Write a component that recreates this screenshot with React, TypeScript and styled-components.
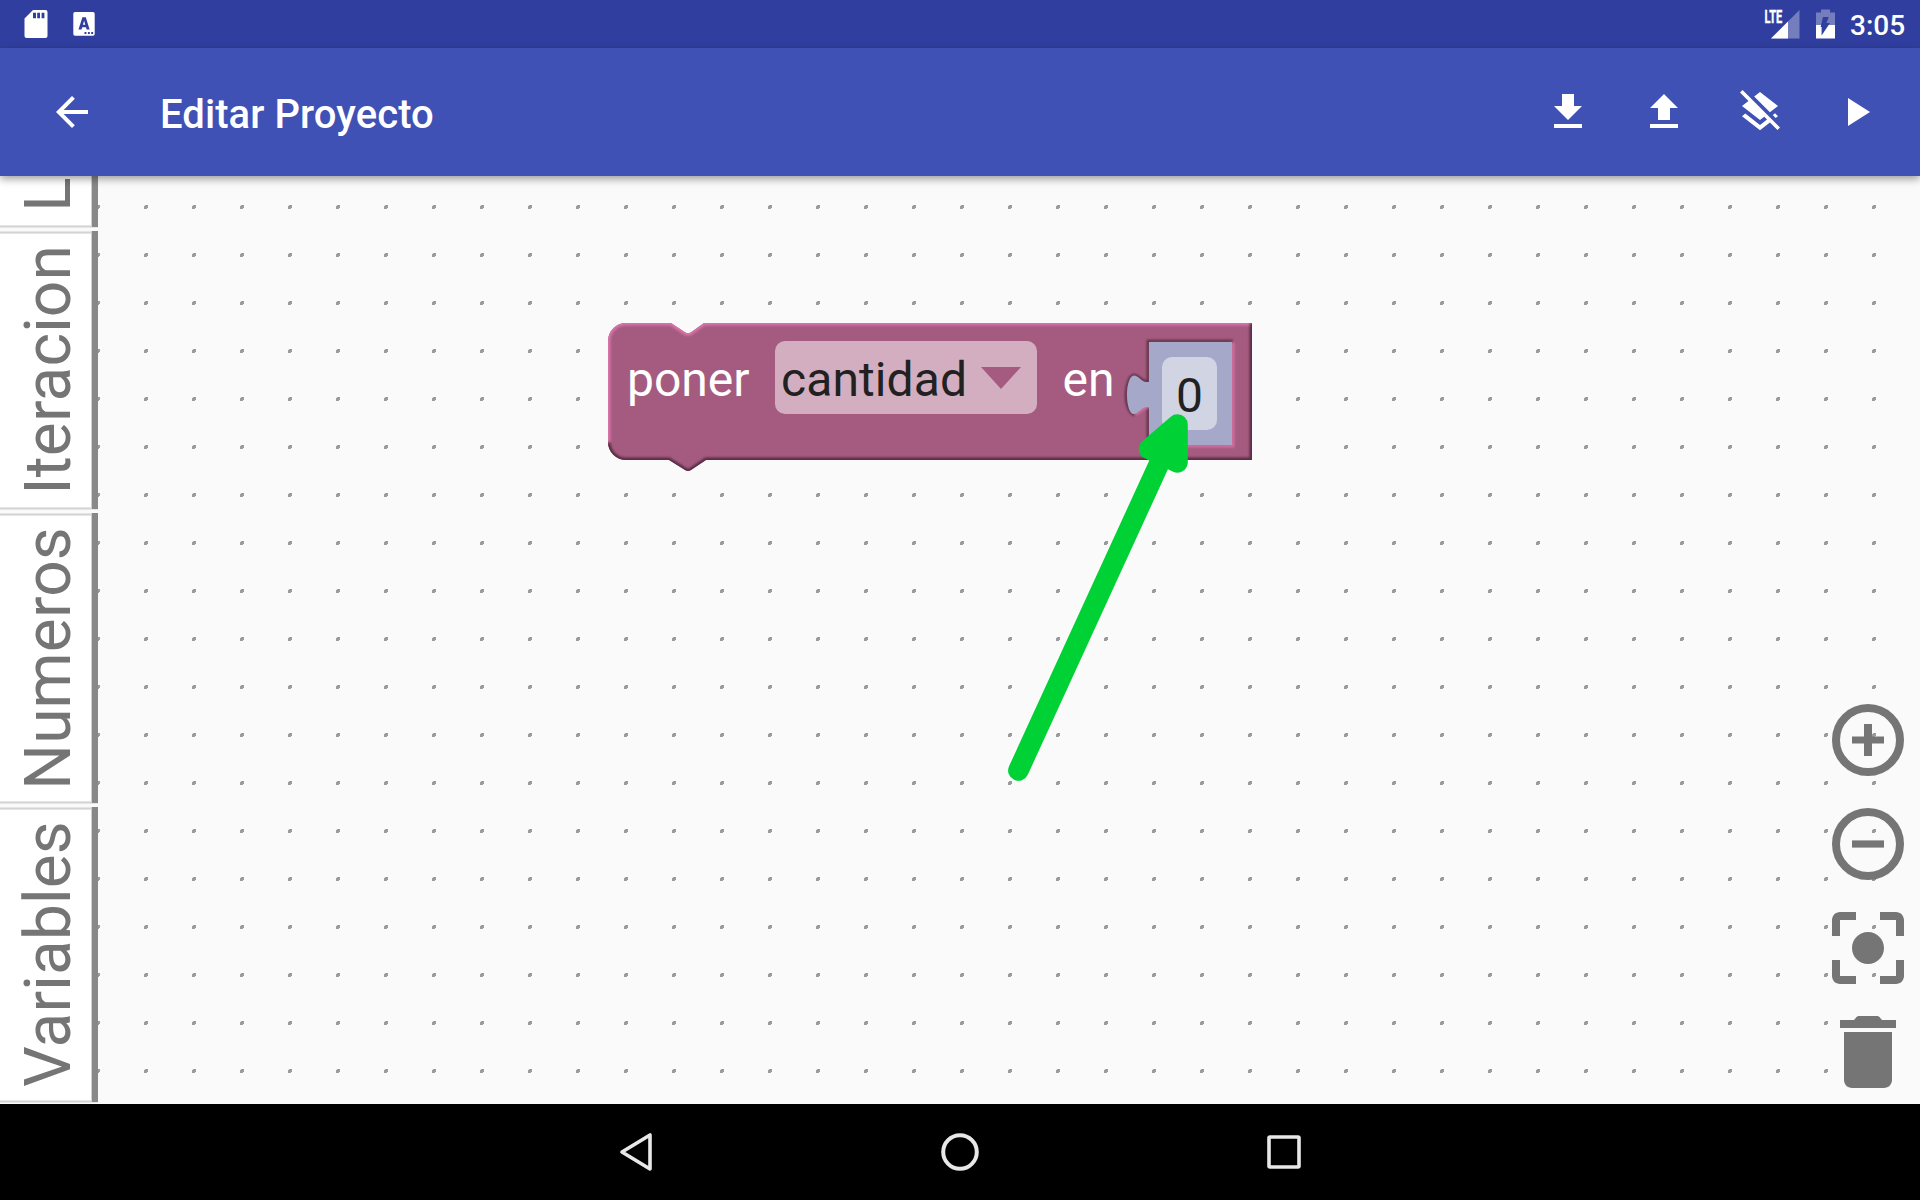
import React from "react";
import styled, { createGlobalStyle } from "styled-components";

const GlobalStyle = createGlobalStyle`
  html, body { margin: 0; padding: 0; background: #000; }
  body { font-family: Roboto, "Noto Sans", sans-serif; overflow: hidden; }
  * { box-sizing: border-box; }
  svg { display: block; }
`;

const Screen = styled.div`
  width: 1920px;
  height: 1200px;
  display: flex;
  flex-direction: column;
  overflow: hidden;
`;

const StatusBar = styled.header`
  height: 48px;
  flex: none;
  background: #303f9f;
  display: flex;
  justify-content: space-between;
  padding: 0 14px 0 24px;
`;

const StatusGroup = styled.div<{ $gap: number }>`
  display: flex;
  align-items: center;
  gap: ${(p) => p.$gap}px;
`;

const Clock = styled.span`
  width: 56px;
  margin-left: -1px;
  font-size: 28px;
  font-weight: 500;
  line-height: 48px;
  padding-top: 3px;
  color: #fff;
  white-space: nowrap;
`;

const AppBar = styled.nav`
  position: relative;
  z-index: 2;
  height: 128px;
  flex: none;
  background: #3f51b5;
  display: flex;
  align-items: center;
  padding: 0 40px 0 48px;
  box-shadow: 0 3px 8px rgba(0, 0, 0, 0.38);
`;

const IconButton = styled.button`
  width: 48px;
  height: 48px;
  padding: 0;
  border: 0;
  background: none;
  color: #fff;
`;

const Title = styled.h1`
  margin: 0 auto 0 64px;
  padding-top: 6px;
  font-size: 40px;
  line-height: 48px;
  font-weight: 500;
  letter-spacing: 0.08px;
  color: #fff;
`;

const Actions = styled.div`
  display: flex;
  gap: 48px;
`;

const Editor = styled.main`
  height: 928px;
  flex: none;
  display: flex;
  background: #fafafa;
`;

const TabList = styled.aside`
  width: 98px;
  flex: none;
  display: flex;
  flex-direction: column;
  justify-content: flex-end;
  gap: 3px;
  padding-bottom: 1px;
  overflow: hidden;
`;

const Tab = styled.div<{ $height: number }>`
  height: ${(p) => p.$height}px;
  flex: none;
  display: flex;
  align-items: center;
  justify-content: center;
  padding-bottom: 1px;
  background:
    linear-gradient(90deg, #d0d0d0 1px, #888 1px) right 0 top 0 / 7px calc(100% - 1px) no-repeat,
    linear-gradient(#e6e6e6 1px, #d3d3d3 1px 2px, #e6e6e6 2px) top / 100% 3px no-repeat,
    linear-gradient(#e6e6e6 1px, #d3d3d3 1px 2px, #e6e6e6 2px) bottom / 100% 3px no-repeat,
    #fff;
`;

const TabLabel = styled.span`
  writing-mode: vertical-rl;
  transform: rotate(180deg);
  font-size: 64px;
  line-height: 76px;
  letter-spacing: 0.15px;
  color: #757575;
  white-space: nowrap;
`;

const Workspace = styled.section`
  position: relative;
  flex: 1;
  display: flex;
  justify-content: flex-end;
  align-items: flex-end;
  overflow: hidden;
`;

const GridLayer = styled.svg`
  position: absolute;
  inset: 0;
`;

const Block = styled.div`
  position: absolute;
  left: 510px;
  top: 147px;
  width: 644px;
  height: 149px;
  display: flex;
  align-items: flex-start;
  padding: 18px 0 0 19px;
`;

const BlockShape = styled.svg`
  position: absolute;
  left: 0;
  top: 0;
  overflow: visible;
`;

const BlockText = styled.span<{ $width: number }>`
  position: relative;
  width: ${(p) => p.$width}px;
  flex: none;
  font-size: 48px;
  line-height: 73px;
  padding-top: 2px;
  color: #fff;
`;

const Dropdown = styled.div`
  position: relative;
  width: 262px;
  height: 73px;
  flex: none;
  display: flex;
  align-items: center;
  padding: 4px 16px 0 6px;
  margin-right: 25.5px;
  justify-content: space-between;
  border-radius: 10px;
  background: #d3aec0;
  font-size: 48px;
  line-height: 73px;
  letter-spacing: 0.1px;
  color: #212121;
`;

const Caret = styled.span`
  border: solid transparent;
  border-width: 22px 20.5px 0;
  border-top-color: #a55b80;
  margin-top: -3px;
`;

const NumberField = styled.div`
  position: relative;
  width: 55px;
  height: 73px;
  margin-top: 16px;
  padding-top: 2px;
  flex: none;
  border-radius: 10px;
  background: #d1d4e3;
  font-size: 48px;
  line-height: 73px;
  text-align: center;
  color: #212121;
`;

const Pointer = styled.svg`
  position: absolute;
  left: 900px;
  top: 230px;
`;

const Controls = styled.div`
  position: relative;
  display: flex;
  flex-direction: column;
  gap: 8px;
  padding: 0 4px 4px 0;
  color: #757575;
`;

const NavBar = styled.footer`
  height: 96px;
  flex: none;
  background: #000;
  display: flex;
  justify-content: center;
  align-items: center;
  gap: 276px;
`;

const Icon = ({ d, size = 48 }: { d: string; size?: number }) => (
  <svg width={size} height={size} viewBox="0 0 24 24" fill="currentColor">
    <path d={d} />
  </svg>
);

const BACK = "M20 11H7.83l5.59-5.59L12 4l-8 8 8 8 1.41-1.41L7.83 13H20v-2z";
const ACTIONS = [
  { name: "download", d: "M19 9h-4V3H9v6H5l7 7 7-7zM5 18v2h14v-2H5z" },
  { name: "upload", d: "M9 16h6v-6h4l-7-7-7 7h4zm-4 2h14v2H5z" },
  {
    name: "clear",
    d: "M19.81 14.99l1.19-.92-1.43-1.43-1.19.92 1.43 1.43zm-.45-4.72L21 9l-9-7-2.91 2.27 7.87 7.88 2.4-1.88zM3.27 1L2 2.27l4.22 4.22L3 9l1.63 1.27L12 16l2.1-1.63 1.43 1.43L12 18.54l-7.37-5.73L3 14.07l9 7 4.95-3.85L20.73 21 22 19.73 3.27 1z",
  },
  { name: "run", d: "M8 5v14l11-7z" },
];

const FOCUS =
  "M12 8c-2.21 0-4 1.79-4 4s1.79 4 4 4 4-1.79 4-4-1.79-4-4-4zm-7 7H3v4c0 1.1.9 2 2 2h4v-2H5v-4zM5 5h4V3H5c-1.1 0-2 .9-2 2v4h2V5zm14-2h-4v2h4v4h2V5c0-1.1-.9-2-2-2zm0 16h-4v2h4c1.1 0 2-.9 2-2v-4h-2v4z";
const TRASH =
  "M6 19c0 1.1.9 2 2 2h8c1.1 0 2-.9 2-2V7H6v12zM19 4h-3.5l-.7-.8Q14.6 3 14.3 3H9.7Q9.4 3 9.2 3.2L8.5 4H5v2h14V4z";

const TABS = [
  { label: "Logica", height: 223 },
  { label: "Iteracion", height: 279 },
  { label: "Numeros", height: 291 },
  { label: "Variables", height: 296 },
];

const ZoomIcon = ({ plus }: { plus?: boolean }) => (
  <svg width="96" height="96" viewBox="0 0 96 96" fill="currentColor">
    <circle cx="48" cy="48" r="32" fill="none" stroke="currentColor" strokeWidth="8" />
    <path
      d={
        plus
          ? "M32 44.4h12V32h8v12.4h12v7.2H52V64h-8V51.6H32z"
          : "M32 44.4h32v7.2H32z"
      }
    />
  </svg>
);

const OUTLINE =
  "M0 18A18 18 0 0 1 18 0H63L77 9.3Q80 11.3 83 9.3L96 0H644V137H98L83 147Q80 149 77 147L61 137H18A18 18 0 0 1 0 119Z";
const LIGHT_EDGE = "M0 120V18A18 18 0 0 1 18 0H63L77 9.3Q80 11.3 83 9.3L96 0H644";
const DARK_EDGE = "M644 0V137H98L83 147Q80 149 77 147L61 137H18A18 18 0 0 1 0 119";
const VALUE =
  "M541 19H624V122H541V84.3H538C534 84.3 530 91 525.5 91C522 91 519 83 519 72C519 61 522 52.5 526 52.5C530 52.5 534 59 538 59H541Z";
const VALUE_DARK =
  "M527 92C522 91 518 83 518 72C518 61 522 52 526 52C530 52 534 58.5 538 58.5H540V18H625M540 85V122";
const VALUE_LIGHT = "M625 19V123H541M541 84.8H538C534 84.8 530 91.5 525.5 91.5";

export default function App() {
  return (
    <>
      <GlobalStyle />
      <Screen>
        <StatusBar>
          <StatusGroup $gap={25}>
            <svg width="24" height="28" viewBox="0 0 24 28">
              <path
                fill="#fff"
                fillRule="evenodd"
                d="M9 0H21.5A2 2 0 0 1 23.5 2V26A2 2 0 0 1 21.5 28H2.5A2 2 0 0 1 .5 26V8.5ZM9 2.7V8.3H12V2.7ZM13.2 2.7V8.3H16V2.7ZM17.6 2.7V8.3H20.4V2.7Z"
              />
            </svg>
            <svg width="22" height="24" viewBox="0 0 22 24">
              <path
                fill="#fff"
                fillRule="evenodd"
                d="M2 0H20A1.7 1.7 0 0 1 21.7 1.7V22A1.7 1.7 0 0 1 20 23.7H2A1.7 1.7 0 0 1 .3 22V1.7A1.7 1.7 0 0 1 2 0ZM9.4 5.3L5.5 17.6H8.6L9.2 15.2H13L13.6 17.6H16.6L12.8 5.3ZM11.1 8.7L12.3 12.8H9.9ZM11.5 20V22H13.4V20ZM14.9 20V22H16.8V20ZM18.2 20V22H20.1V20Z"
              />
            </svg>
          </StatusGroup>
          <StatusGroup $gap={16}>
            <svg width="37" height="40" viewBox="-1 -5 37 40">
              <path d="M35.5 1V29.5H7Z" fill="#747ebc" />
              <path d="M24 12.5V29.5H7Z" fill="#fff" />
              <text
                x="0.4"
                y="13.6"
                fill="#fff"
                stroke="#fff"
                strokeWidth="0.4"
                fontFamily="Roboto, sans-serif"
                fontWeight="700"
                fontSize="17.5"
                textLength="17.8"
                lengthAdjust="spacingAndGlyphs"
              >
                LTE
              </text>
            </svg>
            <svg width="19" height="30" viewBox="0 0 19 30">
              <path d="M0 16.5V3.5H5V.5H14V3.5H19V16.5Z" fill="#747ebc" />
              <path d="M0 16H19V29.5H0Z" fill="#fff" />
              <path d="M7 8H12.8L10.4 14H14L5.6 26.5V18H4.6Z" fill="#303f9f" />
            </svg>
            <Clock>3:05</Clock>
          </StatusGroup>
        </StatusBar>

        <AppBar>
          <IconButton aria-label="back">
            <Icon d={BACK} />
          </IconButton>
          <Title>Editar Proyecto</Title>
          <Actions>
            {ACTIONS.map((a) => (
              <IconButton key={a.name} aria-label={a.name}>
                <Icon d={a.d} />
              </IconButton>
            ))}
          </Actions>
        </AppBar>

        <Editor>
          <TabList>
            {TABS.map((t) => (
              <Tab key={t.label} $height={t.height}>
                <TabLabel>{t.label}</TabLabel>
              </Tab>
            ))}
          </TabList>
          <Workspace>
            <GridLayer width="1822" height="928">
              <defs>
                <pattern id="grid" x="-2" y="29" width="48" height="48" patternUnits="userSpaceOnUse">
                  <path d="M1 0H4V3H3V4H0V1H1Z" fill="#9b9b9b" shapeRendering="crispEdges" />
                </pattern>
              </defs>
              <rect width="1822" height="928" fill="url(#grid)" />
            </GridLayer>

            <Block>
              <BlockShape width="644" height="149">
                <defs>
                  <clipPath id="outline">
                    <path d={OUTLINE} />
                  </clipPath>
                  <filter id="soft" x="-5%" y="-10%" width="110%" height="120%">
                    <feGaussianBlur stdDeviation="0.9" />
                  </filter>
                </defs>
                <path d={OUTLINE} fill="#a55b80" />
                <g clipPath="url(#outline)" fill="none">
                  <g filter="url(#soft)">
                    <path d={LIGHT_EDGE} stroke="#d873a7" strokeWidth="5" />
                    <path d={DARK_EDGE} stroke="#562f43" strokeWidth="5" />
                    <path d={VALUE_LIGHT} stroke="#d873a7" strokeWidth="2.5" />
                    <path d={VALUE_DARK} stroke="#562f43" strokeWidth="2.5" />
                  </g>
                </g>
                <path d={VALUE} fill="#a5a8c8" />
              </BlockShape>
              <BlockText $width={148}>poner</BlockText>
              <Dropdown>
                cantidad
                <Caret />
              </Dropdown>
              <BlockText $width={99.5}>en</BlockText>
              <NumberField>0</NumberField>
            </Block>

            <Pointer width="200" height="390" viewBox="998 406 200 390">
              <g stroke="#00d135" strokeWidth="20.6" strokeLinecap="round" strokeLinejoin="round">
                <path d="M1018.4 770.5L1170 440" />
                <path d="M1177.5 424.5L1149 449L1177.5 462.3Z" fill="#00d135" />
              </g>
            </Pointer>

            <Controls>
              <ZoomIcon plus />
              <ZoomIcon />
              <Icon d={FOCUS} size={96} />
              <Icon d={TRASH} size={96} />
            </Controls>
          </Workspace>
        </Editor>

        <NavBar>
          <svg width="48" height="48" viewBox="0 0 48 48" fill="none" stroke="#e8e8e8" strokeWidth="3.6" strokeLinejoin="round">
            <path d="M38 7V41L10 24Z" />
          </svg>
          <svg width="48" height="48" viewBox="0 0 48 48" fill="none" stroke="#e8e8e8" strokeWidth="4">
            <circle cx="24" cy="24" r="16.8" />
          </svg>
          <svg width="48" height="48" viewBox="0 0 48 48" fill="none" stroke="#e8e8e8" strokeWidth="3.6">
            <rect x="9" y="9" width="30" height="30" rx="1" />
          </svg>
        </NavBar>
      </Screen>
    </>
  );
}
